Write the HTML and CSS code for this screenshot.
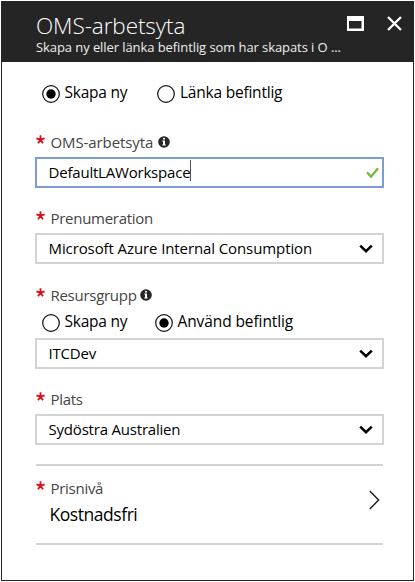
FILE: index.html
```html
<!DOCTYPE html>
<html lang="sv">
<head>
<meta charset="utf-8">
<title>OMS-arbetsyta</title>
<link rel="stylesheet" href="styles.css">
</head>
<body>
<main class="blade">
  <header class="header">
    <div class="title-row">
      <h1 class="title">OMS-arbetsyta</h1>
      <svg class="maximize" width="17" height="15" viewBox="0 0 17 15"><path fill="#fff" fill-rule="evenodd" d="M0 0H17V15H0ZM2 5V12.5H14.5V5Z"/></svg>
      <svg class="close" width="15" height="15" viewBox="0 0 15 15"><path d="M1 1L14 14M14 1L1 14" stroke="#fff" stroke-width="2.3"/></svg>
    </div>
    <p class="subtitle">Skapa ny eller länka befintlig som har skapats i O ...</p>
  </header>
  <form class="form">
    <div class="radios radios-mode">
      <label class="option option-first"><svg class="radio" width="18" height="18" viewBox="0 0 18 18"><circle cx="9" cy="9" r="8.3"/><circle class="dot" cx="9" cy="9" r="4.7"/></svg><span class="create">Skapa ny</span></label>
      <label class="option"><svg class="radio" width="18" height="18" viewBox="0 0 18 18"><circle cx="9" cy="9" r="8.3"/></svg><span class="link">Länka befintlig</span></label>
    </div>

    <div class="label"><svg class="star" width="9" height="9" viewBox="0 0 9 9"><path d="M4.5 4.7V.3M4.5 4.7L.4 3.4M4.5 4.7L8.6 3.4M4.5 4.7L2 8.3M4.5 4.7L7 8.3"/></svg><span class="t-workspace">OMS-arbetsyta</span><svg class="info" width="12" height="12" viewBox="0 0 12 12"><circle cx="6" cy="6" r="5.8" fill="#262626"/><path fill="#fff" d="M5 2h2v1.6H5zM4.3 4.6H7V8.6h.8v1H4.3v-1H5V5.6h-.7z"/></svg></div>
    <div class="field focused"><span class="v-workspace">DefaultLAWorkspace</span><i class="caret"></i><svg class="check" width="13" height="12" viewBox="0 0 13 12"><path d="M1 5.3L5 9.7L12 1.2" fill="none" stroke="#76b83c" stroke-width="2.4"/></svg></div>

    <div class="label label-subscription"><svg class="star" width="9" height="9" viewBox="0 0 9 9"><path d="M4.5 4.7V.3M4.5 4.7L.4 3.4M4.5 4.7L8.6 3.4M4.5 4.7L2 8.3M4.5 4.7L7 8.3"/></svg><span class="t-subscription">Prenumeration</span></div>
    <div class="field"><span class="v-subscription">Microsoft Azure Internal Consumption</span><svg class="arrow" width="14" height="10" viewBox="0 0 14 10"><path d="M1.2 1.6L7 7.2L12.8 1.6"/></svg></div>

    <div class="label label-group"><svg class="star" width="9" height="9" viewBox="0 0 9 9"><path d="M4.5 4.7V.3M4.5 4.7L.4 3.4M4.5 4.7L8.6 3.4M4.5 4.7L2 8.3M4.5 4.7L7 8.3"/></svg><span class="t-group">Resursgrupp</span><svg class="info" width="12" height="12" viewBox="0 0 12 12"><circle cx="6" cy="6" r="5.8" fill="#262626"/><path fill="#fff" d="M5 2h2v1.6H5zM4.3 4.6H7V8.6h.8v1H4.3v-1H5V5.6h-.7z"/></svg></div>
    <div class="radios radios-group">
      <label class="option option-first"><svg class="radio" width="18" height="18" viewBox="0 0 18 18"><circle cx="9" cy="9" r="8.3"/></svg><span class="create">Skapa ny</span></label>
      <label class="option"><svg class="radio" width="18" height="18" viewBox="0 0 18 18"><circle cx="9" cy="9" r="8.3"/><circle class="dot" cx="9" cy="9" r="4.7"/></svg><span class="use">Använd befintlig</span></label>
    </div>
    <div class="field"><span class="v-group">ITCDev</span><svg class="arrow" width="14" height="10" viewBox="0 0 14 10"><path d="M1.2 1.6L7 7.2L12.8 1.6"/></svg></div>

    <div class="label label-location"><svg class="star" width="9" height="9" viewBox="0 0 9 9"><path d="M4.5 4.7V.3M4.5 4.7L.4 3.4M4.5 4.7L8.6 3.4M4.5 4.7L2 8.3M4.5 4.7L7 8.3"/></svg><span class="t-location">Plats</span></div>
    <div class="field"><span class="v-location">Sydöstra Australien</span><svg class="arrow" width="14" height="10" viewBox="0 0 14 10"><path d="M1.2 1.6L7 7.2L12.8 1.6"/></svg></div>

    <section class="pricing">
      <div>
        <div class="label label-pricing"><svg class="star" width="9" height="9" viewBox="0 0 9 9"><path d="M4.5 4.7V.3M4.5 4.7L.4 3.4M4.5 4.7L8.6 3.4M4.5 4.7L2 8.3M4.5 4.7L7 8.3"/></svg><span class="t-pricing">Prisnivå</span></div>
        <div class="tier">Kostnadsfri</div>
      </div>
      <svg class="chevron" width="11" height="20" viewBox="0 0 11 20"><path d="M.8 1L9.6 10L.8 19" fill="none" stroke="#222" stroke-width="1.5"/></svg>
    </section>
  </form>
</main>
</body>
</html>
```
FILE: styles.css
```css
* { box-sizing: border-box; }
body { margin: 0; padding: 1px; background: #fff; font-family: "Open Sans", "Noto Sans", sans-serif; font-size: 15px; color: #000; }
.blade { width: 413px; height: 580px; border: 1px solid #252525; background: #fff; }
.header { height: 60px; background: #252525; color: #fff; padding: 8px 11px 0 34px; }
.title-row { display: flex; height: 28px; }
.title { margin: 0; font-size: 22.5px; font-weight: 300; line-height: 31px; letter-spacing: -.08px; white-space: nowrap; }
.maximize { margin: 6px 0 0 auto; }
.close { margin: 6px 0 0 23px; }
.subtitle { margin: 0; font-size: 13px; line-height: 18px; letter-spacing: -.08px; white-space: nowrap; color: #eee; }
.form { padding: 20px 29px 0 33px; }
.radios { display: flex; height: 20px; padding-left: 7px; }
.radios-mode { margin-bottom: 30px; }
.radios-group { margin: 6px 0 7px; }
.option { display: flex; gap: 4.5px; line-height: 21px; font-size: 15.5px; letter-spacing: -.22px; white-space: nowrap; }
.option-first { width: 115px; }
.radios-group .option-first { width: 113px; }
.link { padding-left: .5px; }
.use { letter-spacing: -.1px; }
.radio { margin-top: 3px; fill: none; stroke: #111; stroke-width: 1.2; }
.dot { fill: #000; stroke: none; }
.label { display: flex; height: 20px; margin-bottom: 5px; line-height: 20px; letter-spacing: -.28px; color: #444; white-space: nowrap; }
.label-subscription { margin-top: 20px; }
.label-group { margin-top: 21px; }
.label-location { margin-top: 20px; }
.label-pricing { margin-bottom: 4px; }
.t-workspace { letter-spacing: -.1px; }
.star { margin: 3px 5.5px 0 1px; fill: none; stroke: #e00b1c; stroke-width: 1.8; }
.info { margin: 4px 0 0 4px; }
.t-workspace + .info { margin-left: 4.5px; }
.t-group + .info { margin-left: 3.5px; }
.field { display: flex; align-items: center; height: 31px; border: 2px solid #d3d3d3; padding: 0 9px 0 11.5px; white-space: nowrap; }
.focused { border-color: #7c9cd3; padding-right: 3px; }
.field span { line-height: 21px; letter-spacing: -.2px; }
.field .v-subscription { letter-spacing: -.1px; }
.caret { width: 1px; height: 21px; background: #555; align-self: flex-start; margin-top: 1px; }
.check { margin-left: auto; }
.arrow { margin-left: auto; fill: none; stroke: #000; stroke-width: 2.5; }
.pricing { display: flex; justify-content: space-between; height: 81px; margin: 19px 1px 0; padding: 12px 3px 0 0; border-top: 2px solid #d3d3d3; border-bottom: 2px solid #d3d3d3; }
.pricing .star { margin-left: 0; }
.tier { padding-left: 13.5px; font-size: 17.5px; line-height: 24px; letter-spacing: -.45px; }
.chevron { margin-top: 12px; }
```
